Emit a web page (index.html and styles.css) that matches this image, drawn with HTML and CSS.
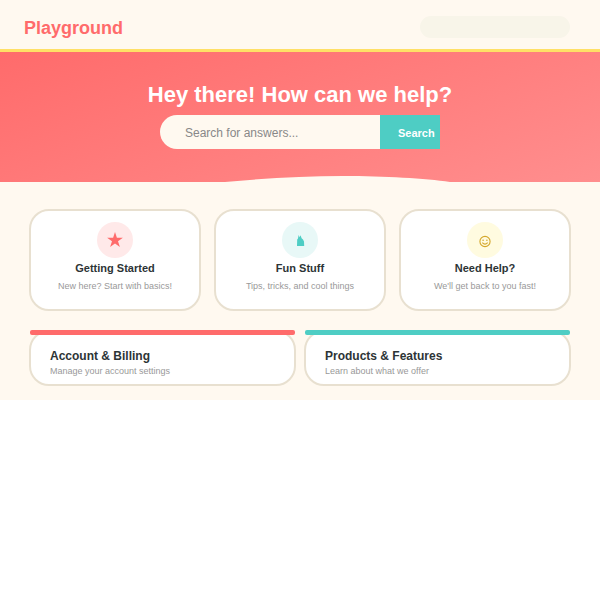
FILE: index.html
```html
<!DOCTYPE html>
<html lang="en">
<head>
<meta charset="utf-8">
<title>Playground</title>
<link rel="stylesheet" href="styles.css">
</head>
<body>
<div class="page">
  <header class="topbar">
    <div class="logo">Playground</div>
    <div class="nav-pill"></div>
  </header>
  <section class="hero">
    <h1 class="hero-title">Hey there! How can we help?</h1>
    <form class="search">
      <div class="search-input">Search for answers...</div>
      <div class="search-btn">Search</div>
    </form>
    <svg class="wave" viewBox="0 0 600 6" width="600" height="6" aria-hidden="true">
      <path d="M225 6 C265 2.4 305 0 343 0 C385 0 425 2.4 450 6 Z"></path>
    </svg>
  </section>
  <main class="content">
    <div class="cards">
      <article class="card">
        <div class="icon icon-red">
          <svg class="glyph" viewBox="0 0 36 36" aria-hidden="true">
            <polygon points="18,10 19.9,15.7 25.9,15.7 21,19.3 22.9,25 18,21.5 13.1,25 15,19.3 10.1,15.7 16.1,15.7"></polygon>
          </svg>
        </div>
        <h3 class="card-title">Getting Started</h3>
        <p class="card-text">New here? Start with basics!</p>
      </article>
      <article class="card">
        <div class="icon icon-teal">
          <svg class="glyph" viewBox="0 0 36 36" aria-hidden="true">
            <path d="M15 24 L15.2 17.5 L16 16.5 L16.6 13 L17.6 15.2 L18.6 13.2 L19.6 16.2 L21 17.6 L22 19.6 L22.2 24 Z"></path>
          </svg>
        </div>
        <h3 class="card-title">Fun Stuff</h3>
        <p class="card-text">Tips, tricks, and cool things</p>
      </article>
      <article class="card">
        <div class="icon icon-yellow">
          <svg class="glyph" viewBox="0 0 36 36" aria-hidden="true">
            <circle class="line" cx="18" cy="19.5" r="5.1"></circle>
            <circle cx="16.1" cy="18.2" r="0.8"></circle>
            <circle cx="19.9" cy="18.2" r="0.8"></circle>
            <path class="line" d="M15.3 20.6 Q18 23.6 20.7 20.6"></path>
          </svg>
        </div>
        <h3 class="card-title">Need Help?</h3>
        <p class="card-text">We'll get back to you fast!</p>
      </article>
    </div>
    <div class="panels">
      <article class="panel panel-red">
        <h2 class="panel-title">Account &amp; Billing</h2>
        <p class="panel-text">Manage your account settings</p>
      </article>
      <article class="panel panel-teal">
        <h2 class="panel-title">Products &amp; Features</h2>
        <p class="panel-text">Learn about what we offer</p>
      </article>
    </div>
  </main>
</div>
</body>
</html>
```
FILE: styles.css
```css
* { box-sizing: border-box; margin: 0; padding: 0; }
body { background: #fff; font-family: "Liberation Sans", Arial, sans-serif; }
.page { background: #fff9f0; height: 400px; }
.topbar {
  height: 52px;
  border-bottom: 3px solid #ffe066;
  display: flex;
  align-items: center;
  justify-content: space-between;
  padding: 8px 30px 0 24px;
}
.logo { font-size: 18px; font-weight: 700; color: #ff6b6b; }
.nav-pill { width: 150px; height: 22px; border-radius: 11px; background: #f8f5e9; margin-bottom: 3px; }
.hero {
  position: relative;
  height: 130px;
  background: linear-gradient(160deg, #ff6b6b, #ff8e8e);
  display: flex;
  flex-direction: column;
  align-items: center;
  padding-top: 30px;
  overflow: hidden;
}
.hero-title { font-size: 22px; line-height: 26px; color: #fff; font-weight: 700; margin-bottom: 7px; }
.search { display: flex; width: 280px; height: 34px; }
.search-input {
  flex: 1;
  background: #fff9f0;
  border-radius: 25px 0 0 25px;
  padding: 1px 0 0 25px;
  font-size: 12px;
  line-height: 34px;
  color: #888;
}
.search-btn {
  width: 60px;
  background: #4ecdc4;
  color: #fff;
  font-size: 11px;
  font-weight: 700;
  line-height: 34px;
  padding: 1px 0 0 18px;
}
.wave { position: absolute; left: 0; bottom: 0; display: block; }
.wave path { fill: #fff9f0; }
.content { padding: 27px 29px 0; }
.cards { display: grid; grid-template-columns: repeat(3, 172px); gap: 13px; }
.card {
  height: 102px;
  background: #fff;
  border: 2px solid #e8e0d0;
  border-radius: 20px;
  padding: 11px 10px 0;
  display: flex;
  flex-direction: column;
  align-items: center;
}
.icon { width: 36px; height: 36px; border-radius: 50%; }
.icon-red { background: #ffe9e9; color: #ff6b6b; }
.icon-teal { background: #e8f8f7; color: #4ecdc4; }
.icon-yellow { background: #fffbe0; color: #d4a72c; }
.glyph { display: block; width: 36px; height: 36px; fill: currentColor; }
.glyph .line { fill: none; stroke: currentColor; stroke-width: 1.1; }
.card-title { font-size: 11px; line-height: 13px; font-weight: 700; color: #2d3436; margin-top: 4px; }
.card-text { font-size: 9px; line-height: 11px; color: #999; margin-top: 6px; }
.panels { display: grid; grid-template-columns: repeat(2, 267px); gap: 8px; margin-top: 19px; }
.panel {
  position: relative;
  height: 56px;
  background: #fff;
  border: 2px solid #e8e0d0;
  border-radius: 20px;
  padding: 17px 19px 0;
}
.panel::before {
  content: "";
  position: absolute;
  left: -1px;
  right: -1px;
  top: -2px;
  height: 5px;
  border-radius: 2px;
}
.panel-red::before { background: #ff6b6b; }
.panel-teal::before { background: #4ecdc4; }
.panel-title { font-size: 12px; line-height: 14px; font-weight: 700; color: #2d3436; }
.panel-text { font-size: 9px; line-height: 11px; color: #999; margin-top: 3px; }
```
